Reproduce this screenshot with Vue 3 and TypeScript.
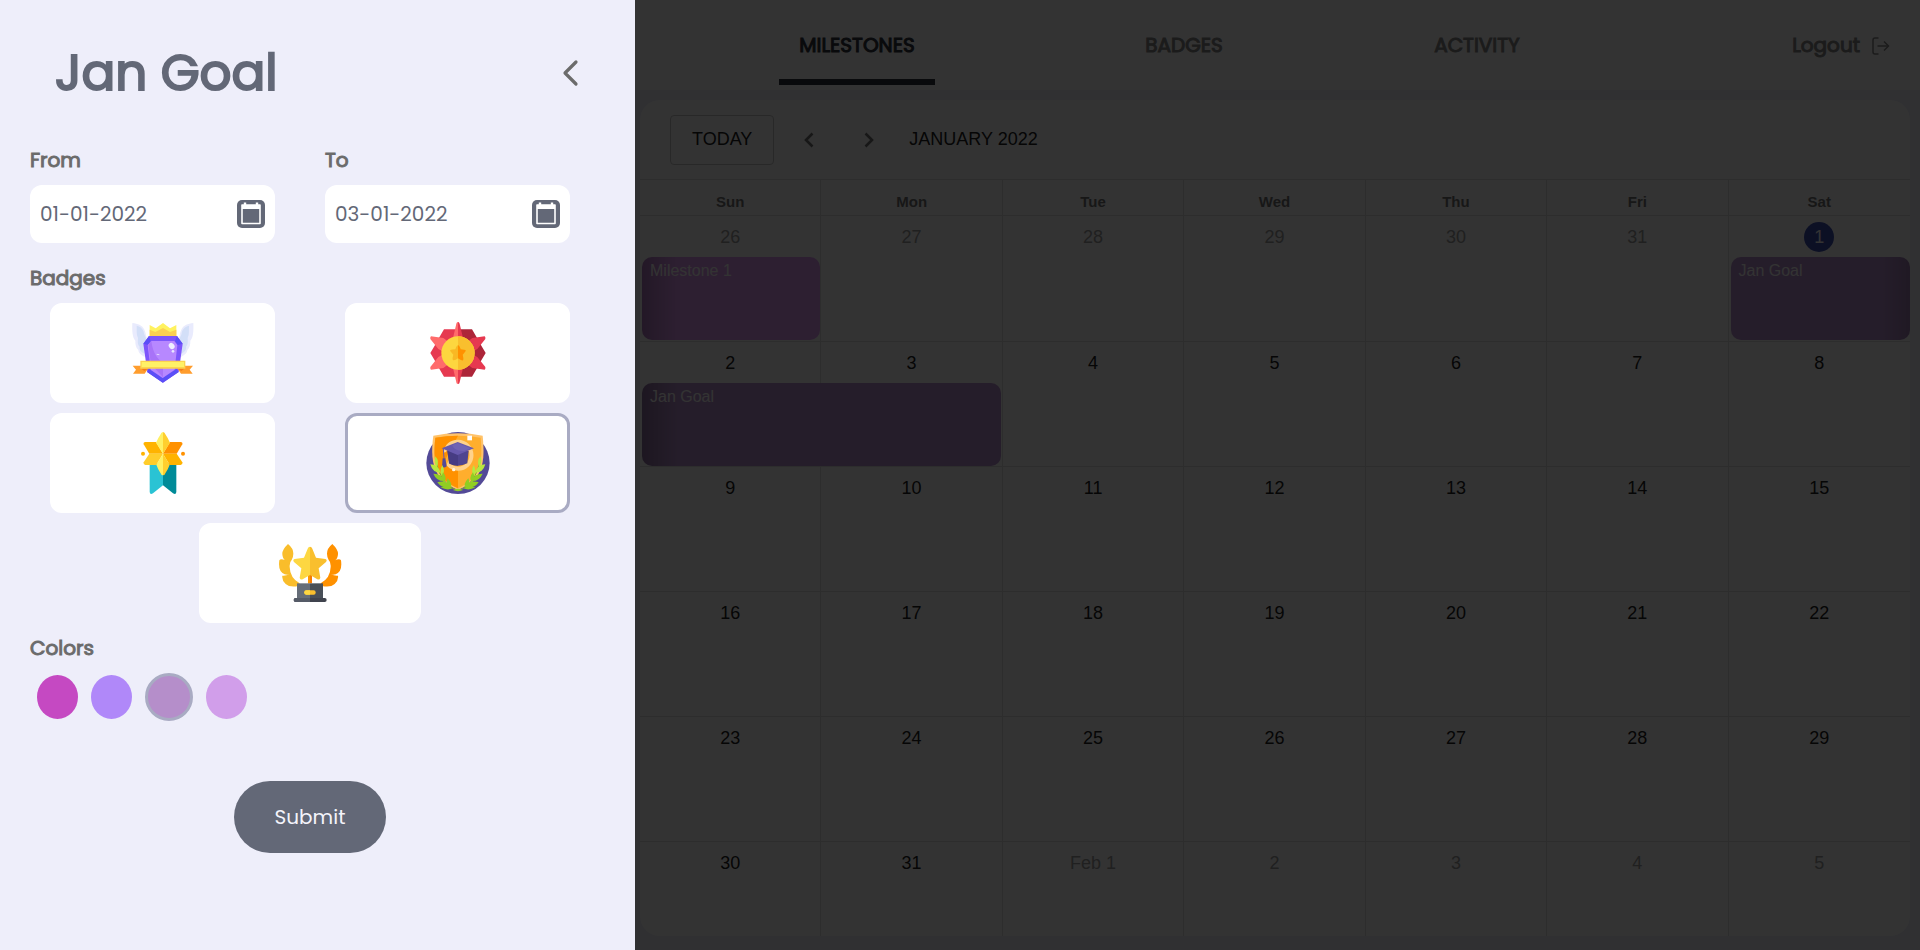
<script setup lang="ts">
import { ref } from 'vue'

interface CalendarEvent {
  title: string
  days: number
  tone: string
  fade: string
}

interface Day {
  label: string
  muted?: boolean
  today?: boolean
  event?: CalendarEvent
}

const title = 'Jan Goal'
const from = ref('01-01-2022')
const to = ref('03-01-2022')
const badge = ref('scholar')
const color = ref('mauve')

const badges = ['crown', 'sun', 'ribbon', 'scholar', 'trophy']
const colors = ['magenta', 'violet', 'mauve', 'lilac']
const tabs = ['MILESTONES', 'BADGES', 'ACTIVITY']
const weekdays = ['Sun', 'Mon', 'Tue', 'Wed', 'Thu', 'Fri', 'Sat']

const events: Record<number, CalendarEvent> = {
  0: { title: 'Milestone 1', days: 1, tone: 'orchid', fade: 'fade-left' },
  6: { title: 'Jan Goal', days: 1, tone: 'plum', fade: 'fade-right' },
  7: { title: 'Jan Goal', days: 2, tone: 'plum', fade: 'fade-left' },
}

function buildDay(index: number): Day {
  const n = index - 5
  const event = events[index]
  if (n < 1) return { label: String(31 + n), muted: true, event }
  if (n > 31) return { label: n === 32 ? 'Feb 1' : String(n - 31), muted: true, event }
  return { label: String(n), today: n === 1, event }
}

const weeks: Day[][] = Array.from({ length: 6 }, (_, w) =>
  Array.from({ length: 7 }, (_, d) => buildDay(w * 7 + d)),
)
</script>

<template>
  <div class="page">
    <aside class="panel">
      <header class="panel-head">
        <h1>{{ title }}</h1>
        <button type="button" class="icon-button" aria-label="Close panel">
          <svg width="18" height="28" viewBox="0 0 18 28"><path d="M15 3 4 14l11 11" fill="none" stroke="#6b6b6b" stroke-width="3.2" stroke-linecap="round" stroke-linejoin="round" /></svg>
        </button>
      </header>

      <form class="form" @submit.prevent>
        <div class="dates">
          <div class="field">
            <label for="from">From</label>
            <div class="date-box">
              <input id="from" v-model="from" type="text" />
              <button type="button" class="icon-button" aria-label="Pick start date">
                <svg width="28" height="28" viewBox="0 0 28 28"><rect width="28" height="28" rx="5" fill="#636877" /><path d="M8 2.5v3M20 2.5v3" stroke="#fff" stroke-width="2.4" /><path d="M5 5h18v18.500H5z" fill="none" stroke="#fff" stroke-width="1.600" stroke-linejoin="round" /><path d="M5 5h18v4H5z" fill="#fff" /></svg>
              </button>
            </div>
          </div>
          <div class="field">
            <label for="to">To</label>
            <div class="date-box">
              <input id="to" v-model="to" type="text" />
              <button type="button" class="icon-button" aria-label="Pick end date">
                <svg width="28" height="28" viewBox="0 0 28 28"><rect width="28" height="28" rx="5" fill="#636877" /><path d="M8 2.5v3M20 2.5v3" stroke="#fff" stroke-width="2.4" /><path d="M5 5h18v18.500H5z" fill="none" stroke="#fff" stroke-width="1.600" stroke-linejoin="round" /><path d="M5 5h18v4H5z" fill="#fff" /></svg>
              </button>
            </div>
          </div>
        </div>

        <fieldset class="group">
          <legend>Badges</legend>
          <div class="badges">
            <label v-for="name in badges" :key="name" class="badge" :class="{ selected: badge === name }">
              <input v-model="badge" type="radio" name="badge" :value="name" :aria-label="name" />
              <svg v-if="name === 'crown'" width="64" height="64" viewBox="302 93 192 192">
                <path d="M306 99c17 2 29 7 35 18 5 9 5 17 8 26l-6 58c-10-6-18-10-19-21-8-8-9-17-9-28-9-9-10-30-9-53z" fill="#e9ebfd" />
                <path d="M489 99c-17 2-29 7-35 18-5 9-5 17-8 26l6 58c10-6 18-10 19-21 8-8 9-17 9-28 9-9 10-30 9-53z" fill="#e9ebfd" />
                <path d="M319 107c14 3 22 14 22 24l6 14-5 46c-10-5-16-13-14-21-8-8-5-18-5-26-6-12-3-25-4-37z" fill="#d3dff8" />
                <path d="M476 107c-14 3-22 14-22 24l-6 14 5 46c10-5 16-13 14-21 8-8 5-18 5-26 6-12 3-25 4-37z" fill="#d3dff8" />
                <path d="M358 105 376 115l22-16 21 16 19-10v34h-80z" fill="#fff25f" />
                <path d="m358 119 17 7 23-12 21 12 19-7v20h-80z" fill="#fcd051" />
                <path d="M356 138h84l17 23-12 85-47 32-47-32-12-85z" fill="#7d55fb" />
                <path d="m356 138 5 15-7 12-15-4zM440 138l-6 15 8 12 15-4zM350 246l47 32 48-32-6-9-42 27-41-27z" fill="#5b4ff7" />
                <path d="M363 153h69l9 12-8 74-36 25-36-25-9-74z" fill="#b788ff" />
                <path d="M363 153v0l-9 12 8 58 36 39v-44c-24-15-32-41-35-65z" fill="#a873f8" />
                <ellipse cx="424" cy="168" rx="8" ry="10" fill="#eff0ff" transform="rotate(-40 424 168)" /><circle cx="428" cy="184" r="4" fill="#e8e7ff" /><path d="m379 193 8 1" stroke="#e5d5ff" stroke-width="3" />
                <path d="M307 227h37l10 8-11 16h-35l9-12zM488 227h-37l-10 8 11 16h35l-9-12z" fill="#ff9d2d" />
                <path d="m331 235 11 8 13-8zM464 235l-11 8-13-8z" fill="#f57c19" />
                <path d="M330 212h135v24H330z" fill="#fcd44e" /><path d="M334 216h127v15H334z" fill="#fff166" />
              </svg>
              <svg v-else-if="name === 'sun'" width="64" height="64" viewBox="287 93 192 192">
                <path d="M341 118h42v142h-42l-17-29-12-22-12-20 12-20 12-22z" fill="#e63950" />
                <path d="M425 118h-42v142h42l17-29 12-22 12-20-12-20-12-22z" fill="#ad2539" />
                <path d="m300 142 2-3 37 5 20 15-24 24-11-6-24-30zM300 236l2 3 37-5 20-15-24-24-11 6-24 30z" fill="#ff6b6b" />
                <path d="m465 142-2-3-37 5-20 15 24 24 11-6 24-30zM465 236l-2 3-37-5-20-15 24-24 11 6 24 30z" fill="#e63950" />
                <path d="M383 96c-4 0-5 4-6 10l-9 38 15 10zM383 282c-4 0-5-4-6-10l-9-38 15-10z" fill="#ff6b6b" />
                <path d="M383 96c4 0 5 4 6 10l9 38-15 10zM383 282c4 0 5-4 6-10l9-38-15-10z" fill="#e63950" />
                <circle cx="383" cy="189" r="50" fill="#fdd63f" /><path d="M383 139a50 50 0 0 1 0 100z" fill="#f9bf2e" />
                <path d="M383 166q4 0 8 12l14 2q4 2-8 14 4 16 0 17-4 1-14-6-11 8-15 5-3-2 1-16-12-12-9-14 3-1 15-2 4-12 8-12z" fill="#f9b824" /><path d="M383 166q4 0 8 12l14 2q4 2-8 14 4 16 0 17-4 1-14-6z" fill="#ff9100" />
              </svg>
              <svg v-else-if="name === 'ribbon'" width="64" height="64" viewBox="302 423 192 192">
                <path d="M358 520h40v66l-30 24q-9 5-10-4z" fill="#2ac3d4" /><path d="M438 520h-40v66l30 24q9 5 10-4z" fill="#008b98" />
                <path d="M345 456h32l21 35h-41l-17-28q-2-6 5-7z" fill="#ffb300" /><path d="M451 456h-32l-21 35h41l17-28q2-6-5-7z" fill="#ff9100" />
                <path d="M357 491h41l-20 34h-33q-7-2-5-8z" fill="#ffcd2b" /><path d="M439 491h-41l20 34h33q7-2 5-8z" fill="#ffb300" />
                <path d="M398 426q-5 0-8 8-7 10-13 24l21 33z" fill="#fff063" /><path d="M398 426q5 0 8 8 7 10 13 24l-21 33z" fill="#ffcf2e" />
                <path d="M398 556q-5 0-8-8-7-10-12-24l20-33z" fill="#fff063" /><path d="M398 556q5 0 8-8 7-10 12-24l-20-33z" fill="#ffcf2e" />
                <circle cx="338" cy="491" r="6" fill="#ffb300" /><circle cx="458" cy="491" r="6" fill="#ff9100" />
              </svg>
              <svg v-else-if="name === 'scholar'" width="64" height="64" viewBox="287 423 192 192">
                <ellipse cx="383" cy="519" rx="95" ry="93" fill="#534a97" />
                <path d="M309 437q74-14 148 0c4 45 6 85-15 119q-21 29-59 44-39-15-59-44c-21-34-21-74-15-119z" fill="#ffc36b" />
                <path d="M315 443q68-12 136 0c4 45 4 79-14 109-12 19-32 33-54 43-23-10-42-24-54-43-18-30-19-64-14-109z" fill="#ffae2d" />
                <path d="M315 443q34-6 68-6l-42 79 30 26-36 19-6-9c-18-30-19-64-14-109zM383 541v54c-20-9-36-19-48-34l36-20z" fill="#ff9100" />
                <path d="M383 449a46 46 0 0 1 0 93q-21 0-35-16l7-15q9 19 28 19a34 34 0 0 0 0-69q-27 0-36 25l-8 2q6-38 44-39z" fill="#ffd28b" />
                <path d="M351 483h64l-4 37q-28 14-55 0z" fill="#4f4590" /><path d="m351 480 32 14v33q-15 0-26-6z" fill="#463c83" />
                <path d="m334 475 48-19 49 19-49 20z" fill="#6759ad" /><path d="m365 466 17-7 39 16-20 8q-27 2-36-17z" fill="#7164b4" />
                <path d="m339 477 2 28" stroke="#6759ad" stroke-width="3" /><path d="m337 505 8 0 4 24q-7 6-14 2z" fill="#534a97" />
                <path d="M318 516q9 56 54 82M448 516q-9 56-54 82" fill="none" stroke="#7fad31" stroke-width="3" />
                <path d="M315 499q13 13 5 34-11-14-5-34zM300 523q23 0 31 25-24 1-31-25zM336 525q10 18-1 34-9-15 1-34zM451 499q-13 13-5 34 11-14 5-34zM465 523q-23 0-31 25 24 1 31-25zM430 525q-10 18 1 34 9-15-1-34z" fill="#b7e83f" />
                <path d="M309 551q23-1 35 22-25 2-35-22zM338 547q14 16 3 33-12-15-3-33zM321 577q24-8 41 14-26 7-41-14zM352 565q17 17 8 32-17-14-8-32zM331 592q19-10 36 3-17 8-36-3zM457 551q-23-1-35 22 25 2 35-22zM428 547q-14 16-3 33 12-15 3-33zM445 577q-24-8-41 14 26 7 41-14zM414 565q-17 17-8 32 17-14 8-32zM435 592q-19-10-36 3 17 8 36-3zM368 600q15-7 30 0-15 7-30 0z" fill="#91ce22" />
                <path d="M411 437h14v14h-14z" fill="#fff" /><circle cx="370" cy="539" r="5" fill="#fff4e0" />
              </svg>
              <svg v-else width="64" height="64" viewBox="294 93 192 192">
                <path d="M324 102q-18 17-17 31 1 14 9 18-14-6-18 0-5 34 16 42 8 2 15 0-12 5-22 4-2 13 10 25 12 11 38 6l4-8q-29-16-30-49-1-15 6-21 14-28-11-48z" fill="#f9bd2b" />
                <path d="M457 102q18 17 17 31-1 14-9 18 14-6 18 0 5 34-16 42-8 2-15 0 12 5 22 4 2 13-10 25-12 11-38 6l-4-8q29-16 30-49 1-15-6-21-14-28 11-48z" fill="#ff9100" />
                <path d="M384 190h12v30h-12z" fill="#f57c00" /><path d="M384 190h6v30h-6z" fill="#ff9800" />
                <path d="M390 110q-5 0-7 6l-11 27-28 4q-7 3-2 9l22 19-5 28q2 8 9 5l22-13z" fill="#fdd742" />
                <path d="M390 110q5 0 7 6l11 27 28 4q7 3 2 9l-22 19 5 28q-2 8-9 5l-22-13z" fill="#f9bf2e" />
                <path d="M351 220h39v48h-39z" fill="#656d78" /><path d="M390 220h39v48h-39z" fill="#484f58" />
                <rect x="373" y="241" width="34" height="13" rx="6" fill="#f9bf2e" /><path d="M379 241h11v13h-11a6 6 0 0 1 0-13z" fill="#fdd742" />
                <rect x="341" y="264" width="99" height="12" rx="6" fill="#3f434d" /><path d="M347 264h43v12h-43a6 6 0 0 1 0-12z" fill="#555b67" />
              </svg>
            </label>
          </div>
        </fieldset>

        <fieldset class="group colors-group">
          <legend>Colors</legend>
          <div class="swatches">
            <input v-for="name in colors" :key="name" v-model="color" type="radio" name="color" :value="name" :aria-label="name" class="swatch" :class="name" />
          </div>
        </fieldset>

        <button type="submit" class="submit">Submit</button>
      </form>
    </aside>

    <main class="main">
      <nav class="nav">
        <a v-for="(tab, i) in tabs" :key="tab" href="#" class="tab" :class="{ active: i === 0 }">{{ tab }}</a>
        <a href="#" class="logout">
          Logout
          <svg width="18" height="18" viewBox="0 0 18 18" fill="none" stroke="currentColor" stroke-width="1.500"><path d="M6.500 1H3a2 2 0 0 0-2 2v12a2 2 0 0 0 2 2h3.500M5.500 9H16" /><path d="m12 4.500 4.500 4.500-4.500 4.500" /></svg>
        </a>
      </nav>

      <section class="calendar">
        <div class="toolbar">
          <button type="button" class="today-button">TODAY</button>
          <button type="button" class="arrow" aria-label="Previous month"><svg width="10" height="16" viewBox="0 0 10 16"><path d="M8.500 1.500 2 8l6.500 6.500" fill="none" stroke="#757575" stroke-width="2.600" /></svg></button>
          <button type="button" class="arrow" aria-label="Next month"><svg width="10" height="16" viewBox="0 0 10 16"><path d="M1.500 1.500 8 8l-6.500 6.500" fill="none" stroke="#757575" stroke-width="2.600" /></svg></button>
          <h2>JANUARY 2022</h2>
        </div>
        <table class="grid">
          <thead>
            <tr><th v-for="day in weekdays" :key="day" scope="col">{{ day }}</th></tr>
          </thead>
          <tbody>
            <tr v-for="(week, w) in weeks" :key="w">
              <td v-for="day in week" :key="day.label">
                <span class="date" :class="{ muted: day.muted, today: day.today }">{{ day.label }}</span>
                <div v-if="day.event" class="event" :class="[day.event.tone, day.event.fade, { wide: day.event.days === 2 }]">{{ day.event.title }}</div>
              </td>
            </tr>
          </tbody>
        </table>
      </section>
      <div class="backdrop"></div>
    </main>
  </div>
</template>

<style>
body {
  margin: 0;
}
</style>

<style scoped>
* {
  box-sizing: border-box;
}
.page {
  display: flex;
  height: 100vh;
  min-height: 900px;
  overflow: hidden;
  background: #eeeefa;
  font-family: Poppins, Inter, sans-serif;
  font-size: 20px;
  color: #6b6b6b;
}
button {
  font: inherit;
  cursor: pointer;
}
.icon-button {
  display: flex;
  flex: none;
  padding: 0;
  border: 0;
  background: none;
}

/* side panel */
.panel {
  flex: none;
  width: 635px;
  padding: 33px 30px;
}
.panel-head {
  display: flex;
  align-items: center;
  justify-content: space-between;
  margin-bottom: 32px;
  padding: 0 26px 0 25px;
}
h1 {
  margin: 0;
  font-size: 50px;
  font-weight: 400;
  line-height: 80px;
  color: #636877;
  -webkit-text-stroke: 2px currentColor;
}
.form {
  display: flex;
  flex-direction: column;
  padding-right: 35px;
}
.dates {
  display: flex;
  gap: 50px;
}
.field {
  display: flex;
  flex: 1;
  flex-direction: column;
  gap: 10px;
  min-width: 0;
}
.field > label,
legend {
  padding: 0;
  line-height: 30px;
  -webkit-text-stroke: 1px currentColor;
}
.date-box {
  display: flex;
  align-items: center;
  height: 58px;
  padding: 0 10px;
  border-radius: 12px;
  background: #fff;
}
.date-box input {
  flex: 1;
  min-width: 0;
  padding: 0;
  border: 0;
  outline: 0;
  background: none;
  font: inherit;
  color: #636877;
}
.group {
  min-width: 0;
  margin: 20px 0 0;
  padding: 0;
  border: 0;
}
.colors-group {
  margin-top: 10px;
}
.badges {
  display: flex;
  flex-wrap: wrap;
  justify-content: center;
  gap: 10px 70px;
  margin: 10px 0 0 20px;
}
.badge {
  display: flex;
  align-items: center;
  justify-content: center;
  width: 225px;
  height: 100px;
  border: 3px solid #fff;
  border-radius: 12px;
  background: #fff;
  cursor: pointer;
}
.badge.selected {
  border-color: #a9abc3;
}
.badge:last-child {
  width: 222px;
}
.badge input {
  position: absolute;
  opacity: 0;
}
.swatches {
  display: flex;
  align-items: center;
  gap: 13px;
  height: 48px;
  margin-top: 10px;
  padding-left: 7px;
}
.swatch {
  appearance: none;
  width: 41px;
  height: 44px;
  margin: 0;
  border-radius: 50%;
  cursor: pointer;
}
.swatch:checked {
  width: 48px;
  height: 48px;
  border: 3px solid #a9abc3;
}
.magenta { background: #c549c2; }
.violet { background: #b088f9; }
.mauve { background: #b58eca; }
.lilac { background: #d19eea; }
.submit {
  align-self: center;
  height: 72px;
  margin: 60px 0 0 20px;
  padding: 0 41px;
  border: 0;
  border-radius: 36px;
  background: #636877;
  color: #f4f4fb;
}

/* calendar side */
.main {
  position: relative;
  display: flex;
  flex: 1;
  flex-direction: column;
  min-width: 0;
}
.nav {
  display: grid;
  flex: none;
  grid-template-columns: 328fr 326fr 260fr 283fr;
  align-items: center;
  justify-items: center;
  height: 90px;
  padding: 0 30px 0 58px;
  background: #fff;
}
.nav a {
  line-height: 30px;
  color: #888;
  text-decoration: none;
  -webkit-text-stroke: 1px currentColor;
}
.nav .tab {
  padding: 25px 20px 19px;
  border-bottom: 6px solid transparent;
}
.nav .active {
  border-color: #30343c;
  color: #30343c;
}
.nav .logout {
  display: flex;
  align-items: center;
  justify-self: end;
  gap: 12px;
}
.logout svg {
  margin-top: 2px;
}
.calendar {
  flex: 1;
  min-height: 0;
  margin: 10px 10px 14px 5px;
  overflow: hidden;
  border-radius: 20px;
  background: #fff;
  font-family: Arial, "Liberation Sans", sans-serif;
  font-size: 18px;
  color: #212121;
}
.toolbar {
  display: flex;
  align-items: center;
  height: 80px;
  padding: 0 30px;
  border-bottom: 1px solid #e0e0e0;
}
.today-button {
  height: 50px;
  margin-right: 5px;
  padding: 0 21px;
  border: 1px solid #c6c6c6;
  border-radius: 4px;
  background: none;
  color: #212121;
}
.arrow {
  display: flex;
  align-items: center;
  justify-content: center;
  width: 60px;
  height: 40px;
  padding: 0;
  border: 0;
  background: none;
}
h2 {
  margin: 0 10px;
  font-size: 18px;
  font-weight: 400;
}
.grid {
  width: 100%;
  table-layout: fixed;
  border-spacing: 0;
}
th,
td {
  padding: 0;
  border: 0 solid #e0e0e0;
  border-width: 0 1px 1px 0;
}
th:last-child,
td:last-child {
  border-right: 0;
}
th {
  height: 36px;
  padding-top: 7px;
  font-size: 15px;
  color: #757575;
}
td {
  position: relative;
  height: 125px;
  vertical-align: top;
  text-align: center;
}
tbody tr:first-child td {
  height: 126px;
}
.date {
  display: block;
  width: 60px;
  margin: 6px auto 0;
  line-height: 30px;
}
.date.muted {
  color: #9e9e9e;
}
.date.today {
  width: 30px;
  border-radius: 50%;
  background: #3f51b5;
  color: #fff;
}
.event {
  position: absolute;
  z-index: 1;
  top: 41px;
  left: 2px;
  width: calc(100% - 2px);
  height: 83px;
  padding: 4px 8px;
  border-radius: 10px;
  font-size: 16px;
  line-height: 20px;
  text-align: left;
  color: #fff;
}
.event.wide {
  width: calc(200% - 2px);
}
.orchid { background-color: #e19bf5; }
.plum { background-color: #b991d0; }
.fade-left { background-image: linear-gradient(to right, rgba(0, 0, 0, 0.22), transparent 36px); }
.fade-right { background-image: linear-gradient(to left, rgba(0, 0, 0, 0.14), transparent 28px); }
.backdrop {
  position: absolute;
  z-index: 2;
  inset: 0;
  background: rgba(0, 0, 0, 0.8);
}
</style>
